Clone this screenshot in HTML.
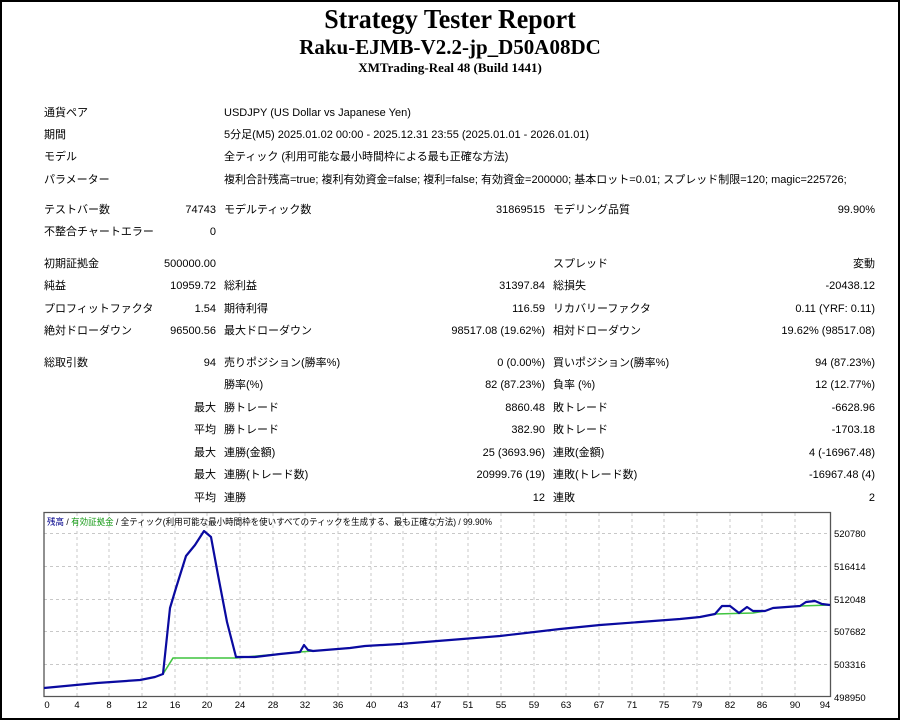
<!DOCTYPE html>
<html><head><meta charset="utf-8"><style>
*{margin:0;padding:0;box-sizing:border-box}
body{width:900px;height:720px;overflow:hidden;background:#fff;position:relative;font-family:"Liberation Sans","Noto Sans CJK JP",sans-serif;font-size:11px;color:#000}
#frame{position:absolute;left:0;top:0;width:900px;height:720px;border:2px solid #000;border-bottom-width:2px}
.h{position:absolute;left:0;width:900px;text-align:center;font-family:"Liberation Serif",serif;font-weight:bold}
.t{position:absolute;line-height:14px;white-space:nowrap}
.r{text-align:right}
</style></head><body>
<div id="frame"></div>
<div class="h" style="top:3px;font-size:27px;line-height:32px;transform:scaleX(0.96)">Strategy Tester Report</div>
<div class="h" style="top:34px;font-size:21px;line-height:26px">Raku-EJMB-V2.2-jp_D50A08DC</div>
<div class="h" style="top:60px;font-size:13px;line-height:16px">XMTrading-Real 48 (Build 1441)</div>

<div class="t" style="left:44px;top:106px">通貨ペア</div><div class="t" style="left:224px;top:106px">USDJPY (US Dollar vs Japanese Yen)</div>
<div class="t" style="left:44px;top:128px">期間</div><div class="t" style="left:224px;top:128px">5分足(M5) 2025.01.02 00:00 - 2025.12.31 23:55 (2025.01.01 - 2026.01.01)</div>
<div class="t" style="left:44px;top:150px">モデル</div><div class="t" style="left:224px;top:150px">全ティック (利用可能な最小時間枠による最も正確な方法)</div>
<div class="t" style="left:44px;top:173px">パラメーター</div><div class="t" style="left:224px;top:173px">複利合計残高=true; 複利有効資金=false; 複利=false; 有効資金=200000; 基本ロット=0.01; スプレッド制限=120; magic=225726;</div>

<div class="t" style="left:44px;top:203px">テストバー数</div><div class="t r" style="right:684px;top:203px">74743</div><div class="t" style="left:224px;top:203px">モデルティック数</div><div class="t r" style="right:355px;top:203px">31869515</div><div class="t" style="left:553px;top:203px">モデリング品質</div><div class="t r" style="right:25px;top:203px">99.90%</div>
<div class="t" style="left:44px;top:225px">不整合チャートエラー</div><div class="t r" style="right:684px;top:225px">0</div>

<div class="t" style="left:44px;top:257px">初期証拠金</div><div class="t r" style="right:684px;top:257px">500000.00</div><div class="t" style="left:553px;top:257px">スプレッド</div><div class="t r" style="right:25px;top:257px">変動</div>
<div class="t" style="left:44px;top:279px">純益</div><div class="t r" style="right:684px;top:279px">10959.72</div><div class="t" style="left:224px;top:279px">総利益</div><div class="t r" style="right:355px;top:279px">31397.84</div><div class="t" style="left:553px;top:279px">総損失</div><div class="t r" style="right:25px;top:279px">-20438.12</div>
<div class="t" style="left:44px;top:302px">プロフィットファクタ</div><div class="t r" style="right:684px;top:302px">1.54</div><div class="t" style="left:224px;top:302px">期待利得</div><div class="t r" style="right:355px;top:302px">116.59</div><div class="t" style="left:553px;top:302px">リカバリーファクタ</div><div class="t r" style="right:25px;top:302px">0.11 (YRF: 0.11)</div>
<div class="t" style="left:44px;top:324px">絶対ドローダウン</div><div class="t r" style="right:684px;top:324px">96500.56</div><div class="t" style="left:224px;top:324px">最大ドローダウン</div><div class="t r" style="right:355px;top:324px">98517.08 (19.62%)</div><div class="t" style="left:553px;top:324px">相対ドローダウン</div><div class="t r" style="right:25px;top:324px">19.62% (98517.08)</div>

<div class="t" style="left:44px;top:356px">総取引数</div><div class="t r" style="right:684px;top:356px">94</div><div class="t" style="left:224px;top:356px">売りポジション(勝率%)</div><div class="t r" style="right:355px;top:356px">0 (0.00%)</div><div class="t" style="left:553px;top:356px">買いポジション(勝率%)</div><div class="t r" style="right:25px;top:356px">94 (87.23%)</div>
<div class="t" style="left:224px;top:378px">勝率(%)</div><div class="t r" style="right:355px;top:378px">82 (87.23%)</div><div class="t" style="left:553px;top:378px">負率 (%)</div><div class="t r" style="right:25px;top:378px">12 (12.77%)</div>
<div class="t r" style="right:684px;top:401px">最大</div><div class="t" style="left:224px;top:401px">勝トレード</div><div class="t r" style="right:355px;top:401px">8860.48</div><div class="t" style="left:553px;top:401px">敗トレード</div><div class="t r" style="right:25px;top:401px">-6628.96</div>
<div class="t r" style="right:684px;top:423px">平均</div><div class="t" style="left:224px;top:423px">勝トレード</div><div class="t r" style="right:355px;top:423px">382.90</div><div class="t" style="left:553px;top:423px">敗トレード</div><div class="t r" style="right:25px;top:423px">-1703.18</div>
<div class="t r" style="right:684px;top:446px">最大</div><div class="t" style="left:224px;top:446px">連勝(金額)</div><div class="t r" style="right:355px;top:446px">25 (3693.96)</div><div class="t" style="left:553px;top:446px">連敗(金額)</div><div class="t r" style="right:25px;top:446px">4 (-16967.48)</div>
<div class="t r" style="right:684px;top:468px">最大</div><div class="t" style="left:224px;top:468px">連勝(トレード数)</div><div class="t r" style="right:355px;top:468px">20999.76 (19)</div><div class="t" style="left:553px;top:468px">連敗(トレード数)</div><div class="t r" style="right:25px;top:468px">-16967.48 (4)</div>
<div class="t r" style="right:684px;top:491px">平均</div><div class="t" style="left:224px;top:491px">連勝</div><div class="t r" style="right:355px;top:491px">12</div><div class="t" style="left:553px;top:491px">連敗</div><div class="t r" style="right:25px;top:491px">2</div>

<svg style="position:absolute;left:0;top:0" width="900" height="720" font-family="Liberation Sans, Noto Sans CJK JP, sans-serif">
<g stroke="#c8c8c8" stroke-dasharray="3,3" stroke-width="1">
<line x1="44" y1="533.5" x2="830" y2="533.5"/><line x1="44" y1="566.5" x2="830" y2="566.5"/><line x1="44" y1="599.5" x2="830" y2="599.5"/><line x1="44" y1="631.5" x2="830" y2="631.5"/><line x1="44" y1="664.5" x2="830" y2="664.5"/>
<path d="M77 513V696M109 513V696M142 513V696M175 513V696M207 513V696M240 513V696M273 513V696M305 513V696M338 513V696M371 513V696M403 513V696M436 513V696M468 513V696M501 513V696M534 513V696M566 513V696M599 513V696M632 513V696M664 513V696M697 513V696M730 513V696M762 513V696M795 513V696"/>
</g>
<path d="M44 512.5H830.5V696.5H44Z" fill="none" stroke="#555" stroke-width="1.3"/>
<g font-size="9.5" fill="#000">
<text x="834" y="537">520780</text><text x="834" y="570">516414</text><text x="834" y="603">512048</text><text x="834" y="635">507682</text><text x="834" y="668">503316</text><text x="834" y="701">498950</text>
</g>
<g font-size="9.5" fill="#000" text-anchor="middle">
<text x="47" y="708">0</text><text x="77" y="708">4</text><text x="109" y="708">8</text><text x="142" y="708">12</text><text x="175" y="708">16</text><text x="207" y="708">20</text><text x="240" y="708">24</text><text x="273" y="708">28</text><text x="305" y="708">32</text><text x="338" y="708">36</text><text x="371" y="708">40</text><text x="403" y="708">43</text><text x="436" y="708">47</text><text x="468" y="708">51</text><text x="501" y="708">55</text><text x="534" y="708">59</text><text x="566" y="708">63</text><text x="599" y="708">67</text><text x="632" y="708">71</text><text x="664" y="708">75</text><text x="697" y="708">79</text><text x="730" y="708">82</text><text x="762" y="708">86</text><text x="795" y="708">90</text><text x="825" y="708">94</text>
</g>
<text x="47" y="525" font-size="9" textLength="445" lengthAdjust="spacingAndGlyphs"><tspan fill="#00008b">残高</tspan> / <tspan fill="#1a9c1a">有効証拠金</tspan> / 全ティック(利用可能な最小時間枠を使いすべてのティックを生成する、最も正確な方法) / 99.90%</text>
<polyline fill="none" stroke="#3fc43f" stroke-width="1.6" points="163,674 173,658 236,658 300,652 313,651 350,648 365,646 400,644 450,640 500,636 560,629 600,625 640,622 680,619 700,617 715,614 753,613 765,611 773,608 800,606 830,605"/>
<polyline fill="none" stroke="#0a0aa0" stroke-width="2.2" stroke-linejoin="round" points="44,688 97,683 140,680 155,677 163,674 170,608 176,588 186,556 195,545 204,531 211,537 218,575 227,622 236,657 255,657 280,654 300,652 304,645 308,650 313,651 350,648 365,646 400,644 450,640 500,636 560,629 600,625 640,622 680,619 700,617 715,614 722,606 730,606 739,613 747,607 753,611 765,611 773,608 800,606 806,602 815,601 822,604 830,605"/>
</svg>
</body></html>
